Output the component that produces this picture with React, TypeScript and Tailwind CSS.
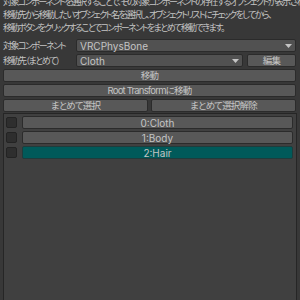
const font = "font-['Inter','Noto_Sans_CJK_JP',sans-serif] [font-feature-settings:'palt']"

function Arrow() {
  return (
    <svg width="7" height="4" viewBox="0 0 7 4" className="shrink-0">
      <path d="M0 0 L7 0 L3.5 4 Z" fill="#c4c4c4" />
    </svg>
  )
}

function Popup({ value, className = "" }: { value: string; className?: string }) {
  return (
    <div
      className={`flex h-[13px] items-center justify-between rounded-[2px] border border-[#2b2b2b] bg-[#515151] pl-[3px] pr-[3px] ${className}`}
    >
      <span className="leading-none">{value}</span>
      <Arrow />
    </div>
  )
}

function Button({ label, className = "" }: { label: string; className?: string }) {
  return (
    <div
      className={`flex h-[13px] items-center justify-center whitespace-nowrap rounded-[2px] border border-[#2b2b2b] bg-[#585858] text-[9.5px] leading-none tracking-[-0.8px] ${className}`}
    >
      {label}
    </div>
  )
}

const items = ["0:Cloth", "1:Body", "2:Hair"]

export default function App() {
  return (
    <div className={`h-[300px] w-[300px] overflow-hidden bg-[#383838] text-[10px] text-[#c4c4c4] ${font}`}>
      <div className="-mt-[5px] pl-[3px] text-[9px] leading-[13px] tracking-[-1.6px]">
        <p className="overflow-hidden whitespace-nowrap">
          対象コンポーネントを選択することで、その対象コンポーネントの存在するオブジェクトが表示されます。
        </p>
        <p className="whitespace-nowrap">移動先から移動したいオブジェクト名を選択し、オブジェクトリストにチェックをしてから、</p>
        <p className="whitespace-nowrap">移動ボタンをクリックすることでコンポーネントをまとめて移動できます。</p>
      </div>

      <div className="mt-[5px] flex flex-col gap-[2px] pl-[3px] pr-[4px]">
        <div className="flex items-center">
          <span className="w-[73px] shrink-0 whitespace-nowrap text-[9px] leading-none tracking-[-1.5px]">
            対象コンポーネント
          </span>
          <Popup value="VRCPhysBone" className="flex-1" />
        </div>
        <div className="flex items-center">
          <span className="w-[73px] shrink-0 whitespace-nowrap text-[9px] leading-none tracking-[-1.5px]">
            移動先（まとめて）
          </span>
          <Popup value="Cloth" className="flex-1" />
          <Button label="編集" className="ml-[4px] w-[49px]" />
        </div>
        <Button label="移動" />
        <Button label="Root Transformに移動" />
        <div className="flex gap-[3px]">
          <Button label="まとめて選択" className="flex-1" />
          <Button label="まとめて選択解除" className="flex-1" />
        </div>
      </div>

      <div className="ml-[3px] mr-[3px] mt-[1px] flex h-[200px] flex-col gap-[2px] border border-[#262626] bg-[#404040] pl-[2px] pr-[3px] pt-[2px]">
        {items.map((item, i) => (
          <div key={item} className="flex items-center gap-[5px]">
            <div className="h-[11px] w-[11px] rounded-[2px] border border-[#232323] bg-[#2e2e2e]" />
            <div
              className={`flex h-[13px] flex-1 items-center justify-center rounded-[2px] border leading-none ${
                i === 2 ? "border-[#1f3c3c] bg-[#005a5a]" : "border-[#2b2b2b] bg-[#585858]"
              }`}
            >
              {item}
            </div>
          </div>
        ))}
      </div>
    </div>
  )
}
